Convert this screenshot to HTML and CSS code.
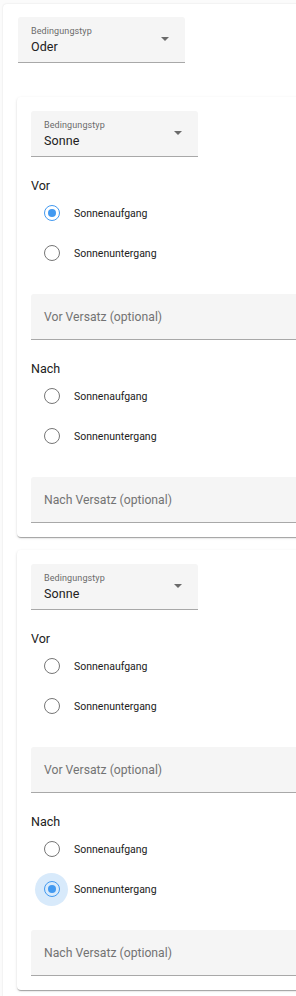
FILE: index.html
```html
<!DOCTYPE html>
<html lang="de">
<head>
<meta charset="utf-8">
<link rel="stylesheet" href="styles.css">
</head>
<body>
<div class="outer">
  <div class="select sel-top">
    <span class="sel-label">Bedingungstyp</span>
    <span class="sel-value">Oder</span>
    <svg class="arrow" width="8" height="4" viewBox="0 0 8 4"><polygon points="0,0 8,0 4,4" fill="#6b6b6b"/></svg>
  </div>

  <div class="card">
    <div class="select">
      <span class="sel-label">Bedingungstyp</span>
      <span class="sel-value">Sonne</span>
      <svg class="arrow" width="8" height="4" viewBox="0 0 8 4"><polygon points="0,0 8,0 4,4" fill="#6b6b6b"/></svg>
    </div>
    <div class="group-label">Vor</div>
    <div class="row"><span class="radio"><span class="ring checked"><span class="dot"></span></span></span><span class="rlabel">Sonnenaufgang</span></div>
    <div class="row"><span class="radio"><span class="ring"></span></span><span class="rlabel">Sonnenuntergang</span></div>
    <div class="field">Vor Versatz (optional)</div>
    <div class="group-label">Nach</div>
    <div class="row"><span class="radio"><span class="ring"></span></span><span class="rlabel">Sonnenaufgang</span></div>
    <div class="row"><span class="radio"><span class="ring"></span></span><span class="rlabel">Sonnenuntergang</span></div>
    <div class="field">Nach Versatz (optional)</div>
  </div>

  <div class="card">
    <div class="select">
      <span class="sel-label">Bedingungstyp</span>
      <span class="sel-value">Sonne</span>
      <svg class="arrow" width="8" height="4" viewBox="0 0 8 4"><polygon points="0,0 8,0 4,4" fill="#6b6b6b"/></svg>
    </div>
    <div class="group-label">Vor</div>
    <div class="row"><span class="radio"><span class="ring"></span></span><span class="rlabel">Sonnenaufgang</span></div>
    <div class="row"><span class="radio"><span class="ring"></span></span><span class="rlabel">Sonnenuntergang</span></div>
    <div class="field">Vor Versatz (optional)</div>
    <div class="group-label">Nach</div>
    <div class="row"><span class="radio"><span class="ring"></span></span><span class="rlabel">Sonnenaufgang</span></div>
    <div class="row"><span class="radio focused"><span class="ring checked"><span class="dot"></span></span></span><span class="rlabel">Sonnenuntergang</span></div>
    <div class="field">Nach Versatz (optional)</div>
  </div>
</div>
</body>
</html>
```

FILE: styles.css
```css
html, body {
  margin: 0;
  padding: 0;
  overflow: hidden;
  background: #fbfbfb;
  font-family: Roboto, "Liberation Sans", sans-serif;
  color: #212121;
}
.outer {
  margin: 4px 0 0 3px;
  width: 420px;
  padding: 13px 14px 14px 14px;
  background: #fff;
  border-radius: 4px;
  box-shadow: 0 0 2px rgba(0,0,0,0.12);
}
.select {
  position: relative;
  width: 167px;
  height: 46px;
  box-sizing: border-box;
  background: #f5f5f5;
  border-radius: 3px 3px 0 0;
  border-bottom: 1px solid #a8a8a8;
  display: flex;
  flex-direction: column;
  padding-left: 13px;
}
.sel-top { margin-left: 1px; }
.sel-label {
  font-size: 9px;
  color: #6b6b6b;
  line-height: 12px;
  margin-top: 8px;
  letter-spacing: 0.1px;
}
.sel-value {
  font-size: 12.5px;
  line-height: 16px;
  margin-top: 2px;
  color: #212121;
  letter-spacing: 0.1px;
}
.arrow {
  position: absolute;
  right: 16px;
  top: 20px;
}
.card {
  margin-top: 34px;
  background: #fff;
  border-radius: 4px;
  padding: 14px 0 14px 14px;
  box-shadow: 0 2px 1px -1px rgba(0,0,0,.2), 0 1px 1px 0 rgba(0,0,0,.14), 0 1px 3px 0 rgba(0,0,0,.12);
}
.card + .card { margin-top: 13px; }
.group-label {
  margin-top: 21px;
  font-size: 12.5px;
  line-height: 15px;
  color: #212121;
}
.row {
  height: 40px;
  display: flex;
  align-items: center;
  padding-left: 4px;
}
.radio {
  width: 33px;
  height: 33px;
  border-radius: 50%;
  display: flex;
  align-items: center;
  justify-content: center;
  flex: none;
}
.radio.focused { background: #d8eafb; }
.ring {
  width: 16px;
  height: 16px;
  box-sizing: border-box;
  border: 1.6px solid #767676;
  border-radius: 50%;
  display: flex;
  align-items: center;
  justify-content: center;
}
.ring.checked { border-color: #4299f0; }
.dot {
  width: 8px;
  height: 8px;
  border-radius: 50%;
  background: #4299f0;
}
.rlabel {
  margin-left: 6px;
  font-size: 10.5px;
  letter-spacing: 0;
  color: #212121;
}
.field {
  margin-top: 21px;
  height: 46px;
  box-sizing: border-box;
  background: #f5f5f5;
  border-radius: 3px 3px 0 0;
  border-bottom: 1px solid #a8a8a8;
  padding-left: 13px;
  display: flex;
  align-items: center;
  font-size: 12.2px;
  color: #737373;
  letter-spacing: 0;
}
```
